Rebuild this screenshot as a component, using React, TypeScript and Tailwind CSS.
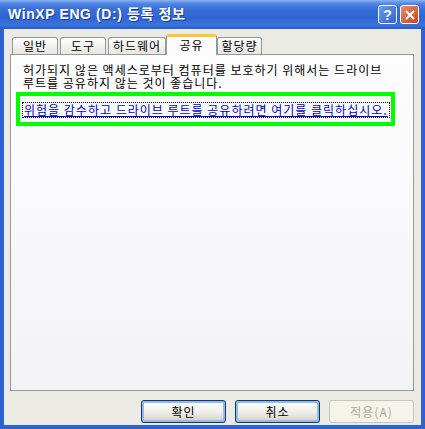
import { X } from "lucide-react";

const font = "font-['Noto_Sans_CJK_KR','Liberation_Sans',sans-serif]";

function Tab({ label, width, active = false, className = "" }: { label: string; width: number; active?: boolean; className?: string }) {
  if (active) {
    return (
      <div
        style={{ width }}
        className={`relative z-10 -mb-px flex h-[21px] items-start justify-center rounded-t-[3px] border border-b-0 border-[#919B9C] border-t-[3px] border-t-[#FFC83C] bg-[#FCFCFE] pt-[1px] text-[12px] leading-[14px] tracking-[1px] text-black ${className}`}
      >
        {label}
      </div>
    );
  }
  return (
    <div
      style={{ width }}
      className={`flex h-[17px] items-center justify-center rounded-t-[3px] border border-b-0 border-[#919B9C] bg-gradient-to-b from-white to-[#E6E5E0] text-[12px] leading-[14px] tracking-[1px] text-black ${className}`}
    >
      {label}
    </div>
  );
}

function XpButton({ label, disabled = false, focused = false }: { label: string; disabled?: boolean; focused?: boolean }) {
  if (disabled) {
    return (
      <button className="h-[23px] w-[85px] rounded-[3px] border border-[#C9C7BA] bg-[#F5F4EA] text-[12px] tracking-[1px] text-[#ACA899]">
        {label}
      </button>
    );
  }
  return (
    <button
      className={`h-[23px] w-[85px] rounded-[3px] border border-[#003C74] bg-gradient-to-b from-white via-[#F0F0EA] to-[#D6D0C5] text-[12px] tracking-[1px] text-black ${
        focused ? "shadow-[inset_0_0_0_2px_#98B8EA]" : ""
      }`}
    >
      {label}
    </button>
  );
}

export default function App() {
  return (
    <div className={`flex h-[429px] w-[425px] flex-col overflow-hidden bg-[#2E62D0] ${font}`}>
      {/* Title bar */}
      <div className="flex h-[29px] shrink-0 items-center bg-[linear-gradient(to_bottom,#8AB2F0_0%,#5287E4_12%,#3A70D8_30%,#2F64D3_60%,#3A73DD_85%,#2C5DC8_100%)] pl-[8px] pr-[6px]">
        <span className="text-[14px] font-bold tracking-[0.6px] text-white [text-shadow:1px_1px_0_#1A3E9A] font-['Liberation_Sans','Noto_Sans_CJK_KR',sans-serif]">
          WinXP ENG (D:) 등록 정보
        </span>
        <div className="ml-auto flex gap-[3px]">
          <div className="flex h-[19px] w-[19px] items-center justify-center rounded-[3px] border border-white bg-gradient-to-br from-[#6D9CEB] to-[#2F62D6] text-[14px] font-bold leading-none text-white font-['Liberation_Sans',sans-serif]">
            ?
          </div>
          <div className="flex h-[19px] w-[19px] items-center justify-center rounded-[3px] border border-white bg-gradient-to-br from-[#E98A6A] to-[#C8451F]">
            <X size={14} strokeWidth={3.2} color="white" />
          </div>
        </div>
      </div>

      {/* Window body */}
      <div className="mx-[4px] mb-[4px] flex flex-1 flex-col bg-[#ECEAE4] pb-[2px]">
        {/* Tabs */}
        <div className="mt-[5px] flex h-[20px] items-end pl-[8px]">
          <Tab label="일반" width={46} />
          <Tab label="도구" width={46} className="ml-[2px]" />
          <Tab label="하드웨어" width={58} className="ml-[2px]" />
          <Tab label="공유" width={51} active />
          <Tab label="할당량" width={45} />
        </div>

        {/* Panel */}
        <div className="ml-[6px] mr-[7px] flex-1 border border-[#919B9C] bg-gradient-to-b from-[#FDFDFE] to-[#F3F3F5] pl-[5px] pt-[8px]">
          <p className="pl-[7px] text-[12px] leading-[13px] tracking-[1px] text-black">
            허가되지 않은 액세스로부터 컴퓨터를 보호하기 위해서는 드라이브
            <br />
            루트를 공유하지 않는 것이 좋습니다.
          </p>
          <div className="mt-[3px] w-[379px] border-4 border-[#00FF00] pb-[2px] pl-[2px]">
            <span className="inline-block h-[16px] whitespace-nowrap border border-dotted border-black px-[1px] text-[12px] leading-[14px] tracking-[1px] text-[#0000CC] underline">
              위험을 감수하고 드라이브 루트를 공유하려면 여기를 클릭하십시오.
            </span>
          </div>
        </div>

        {/* Buttons */}
        <div className="mt-[9px] flex justify-end gap-[9px] pr-[7px]">
          <XpButton label="확인" focused />
          <XpButton label="취소" focused />
          <XpButton label="적용(A)" disabled />
        </div>
      </div>
    </div>
  );
}
